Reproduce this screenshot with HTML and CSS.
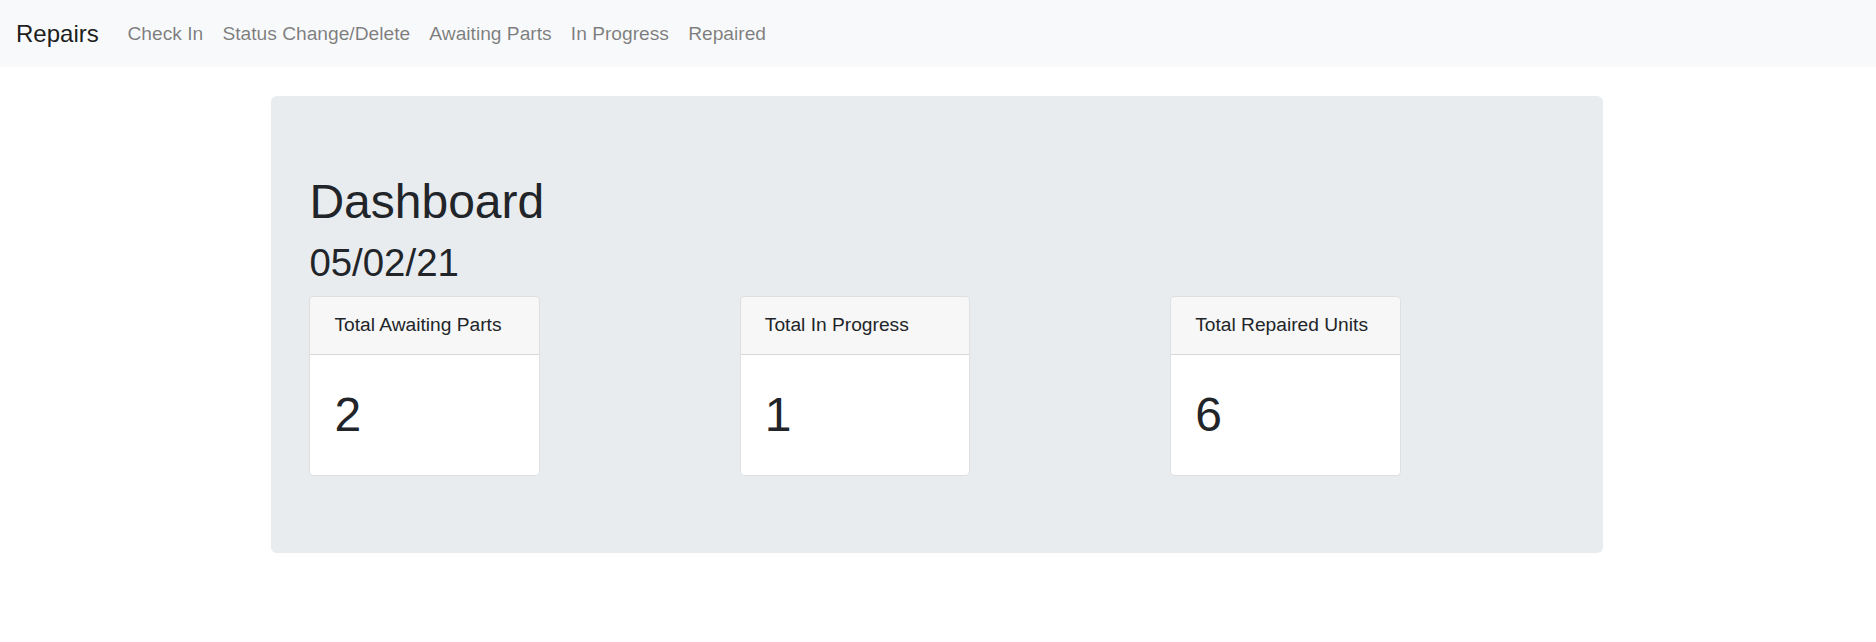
FILE: index.html
```html
<!DOCTYPE html>
<html lang="en">
<head>
<meta charset="utf-8">
<title>Repairs</title>
<link rel="stylesheet" href="styles.css">
</head>
<body>
<nav class="navbar">
  <a class="brand" href="#">Repairs</a>
  <ul class="nav">
    <li><a class="nav-link" href="#">Check In</a></li>
    <li><a class="nav-link" href="#">Status Change/Delete</a></li>
    <li><a class="nav-link" href="#">Awaiting Parts</a></li>
    <li><a class="nav-link" href="#">In Progress</a></li>
    <li><a class="nav-link" href="#">Repaired</a></li>
  </ul>
</nav>
<div class="container">
  <div class="jumbotron">
    <h1 class="title">Dashboard</h1>
    <h2 class="date">05/02/21</h2>
    <div class="row">
      <div class="col">
        <div class="card">
          <div class="card-header">Total Awaiting Parts</div>
          <div class="card-body"><h1 class="card-title">2</h1></div>
        </div>
      </div>
      <div class="col">
        <div class="card">
          <div class="card-header">Total In Progress</div>
          <div class="card-body"><h1 class="card-title">1</h1></div>
        </div>
      </div>
      <div class="col">
        <div class="card">
          <div class="card-header">Total Repaired Units</div>
          <div class="card-body"><h1 class="card-title">6</h1></div>
        </div>
      </div>
    </div>
  </div>
</div>
</body>
</html>
```

FILE: styles.css
```css
html {
  font-size: 19.2px;
}
* {
  box-sizing: border-box;
}
body {
  margin: 0;
  font-family: "Liberation Sans", Arial, sans-serif;
  font-size: 1rem;
  line-height: 1.5;
  color: #212529;
  background: #fff;
}
a {
  text-decoration: none;
}
.navbar {
  display: flex;
  align-items: center;
  padding: 0.5rem 1rem 0.5rem 16px;
  background: #f8f9fa;
}
.brand {
  font-size: 1.25rem;
  padding: 0.3125rem 0;
  margin-right: 1rem;
  color: rgba(0, 0, 0, 0.9);
  line-height: 1.5;
}
.nav {
  display: flex;
  list-style: none;
  margin: 0;
  padding: 0;
}
.nav-link {
  display: block;
  padding: 0.55rem 0.5rem 0.45rem;
  color: rgba(0, 0, 0, 0.5);
}
.container {
  max-width: 1368px;
  margin: 0 auto;
  padding: 0 19px 0 17px;
  margin-top: 1.5rem;
}
.jumbotron {
  background: #e9ecef;
  border-radius: 0.3rem;
  padding: 4rem 2rem;
  margin-bottom: 2rem;
}
.title {
  font-size: 2.5rem;
  font-weight: 500;
  line-height: 1.2;
  margin: 0 0 0.5rem;
}
.date {
  font-size: 2rem;
  font-weight: 500;
  line-height: 1.2;
  margin: 0 0 0.5rem;
}
.row {
  display: flex;
  margin: 0 -18px;
}
.col {
  flex: 1 1 0;
  padding: 0 18px;
}
.card {
  width: 12rem;
  background: #fff;
  border: 1px solid rgba(0, 0, 0, 0.125);
  border-radius: 0.25rem;
  overflow: hidden;
}
.card-header {
  padding: 0.75rem 1.25rem;
  background: rgba(0, 0, 0, 0.03);
  border-bottom: 1px solid rgba(0, 0, 0, 0.125);
}
.card-body {
  padding: 1.25rem;
}
.card-title {
  font-size: 2.5rem;
  font-weight: 500;
  line-height: 1.5;
  margin: 0;
}
```
